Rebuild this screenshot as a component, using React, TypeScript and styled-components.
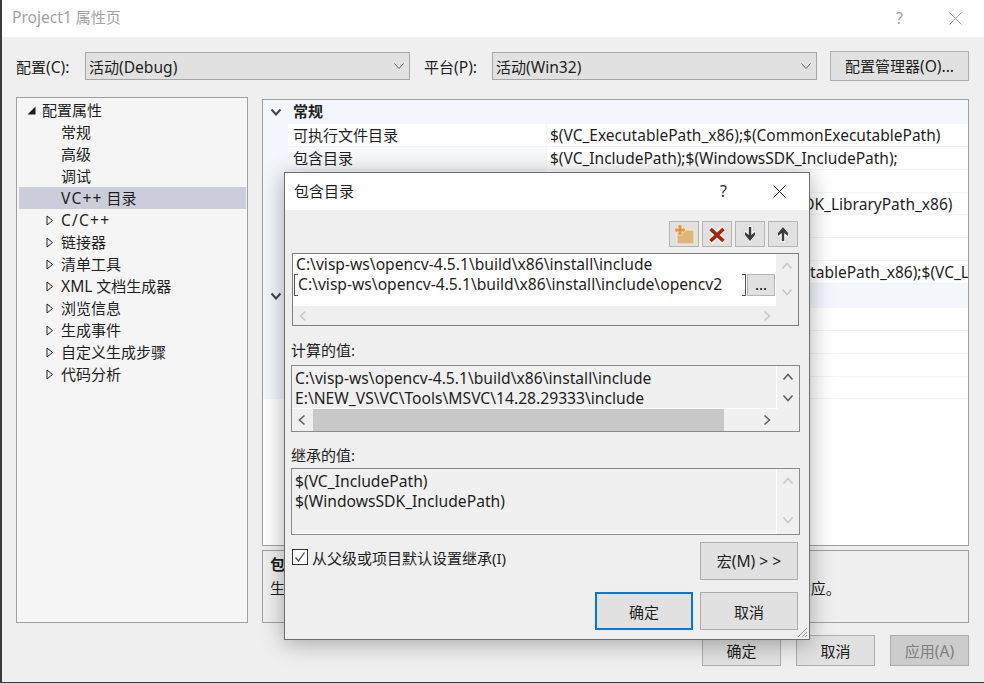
import React from "react";
import styled, { createGlobalStyle } from "styled-components";

const GlobalStyle = createGlobalStyle`
    html, body {
        margin: 0;
        padding: 0;
        background: #efefef;
    }
    * {
        box-sizing: border-box;
    }
    body {
        font-family: "Noto Sans", "Noto Sans CJK SC", sans-serif;
        font-size: 15px;
        color: #1e1e1e;
    }
`;

const ROW_H = "22.86px";

const Window = styled.div`
    position: relative;
    width: 984px;
    height: 683px;
    display: flex;
    flex-direction: column;
    overflow: hidden;
    background: #efefef;
    border-left: 2px solid #3a3a3a;
    border-bottom: 1px solid #3a3a3a;
`;

const TitleBar = styled.div`
    height: 37px;
    flex: none;
    display: flex;
    align-items: center;
    background: #fff;
    padding: 0 22px 0 10px;
    color: #a2a2a2;
`;

const TitleText = styled.div`
    flex: 1;
    padding-bottom: 3px;
`;

const Latin = styled.span<{ $spaced?: boolean }>`
    font-size: 15.6px;
    letter-spacing: ${({ $spaced }) => ($spaced ? "1.2px" : "0")};
`;

const HelpMark = styled.span<{ $dim?: boolean }>`
    color: ${({ $dim }) => ($dim ? "#a2a2a2" : "#1e1e1e")};
    margin-right: 46px;
    padding-bottom: 2px;
    font-size: 16px;
`;

const Content = styled.div`
    flex: 1;
    display: flex;
    flex-direction: column;
    padding: 14px 15px 0 14px;
`;

const ConfigRow = styled.div`
    display: flex;
    align-items: center;
    height: 30px;
`;

const ConfigLabel = styled.label<{ $width: number; $indent?: number }>`
    width: ${({ $width }) => $width}px;
    padding: 2px 0 0 ${({ $indent }) => $indent ?? 0}px;
    flex: none;
`;

const Select = styled.div`
    width: 325px;
    height: 28px;
    flex: none;
    display: flex;
    align-items: center;
    justify-content: space-between;
    padding: 0 4px 0 3px;
    background: #e1e1e1;
    border: 1px solid #a6a6a6;
`;

const SelectValue = styled.span`
    padding-top: 2px;
`;

const Button = styled.button<{ $w: number; $h: number; $primary?: boolean; $disabled?: boolean }>`
    width: ${({ $w }) => $w}px;
    height: ${({ $h }) => $h}px;
    flex: none;
    padding: 0;
    font: inherit;
    background: ${({ $disabled }) => ($disabled ? "#cccccc" : "#e1e1e1")};
    color: ${({ $disabled }) => ($disabled ? "#7e7e7e" : "#1e1e1e")};
    border: ${({ $primary }) => ($primary ? "2px solid #0078d7" : "1px solid #adadad")};
`;

const ManagerButton = styled(Button)`
    margin-left: 13px;
`;

const Main = styled.div`
    display: flex;
    margin-top: 16px;
    height: 526px;
`;

const Tree = styled.div`
    width: 232px;
    flex: none;
    margin-right: 14px;
    padding: 1px;
    background: #f5f5f5;
    border: 1px solid #a0a0a0;
`;

const TreeRow = styled.div<{ $level: number; $selected?: boolean }>`
    height: 22px;
    display: flex;
    align-items: center;
    margin-left: 1px;
    padding-left: ${({ $level }) => ($level ? 27 : 8)}px;
    line-height: 20px;
    background: ${({ $selected }) => ($selected ? "#cbcdda" : "transparent")};
    white-space: pre;
`;

const TreeArrow = styled.span`
    width: 15px;
    flex: none;
    display: flex;
    align-items: center;
`;

const RightColumn = styled.div`
    flex: 1;
    display: flex;
    flex-direction: column;
    gap: 4px;
    padding-top: 2px;
`;

const PropsPanel = styled.div`
    height: 447px;
    flex: none;
    overflow: hidden;
    background: #fff;
    border: 1px solid #a0a0a0;
`;

const SectionRow = styled.div`
    height: 24px;
    display: flex;
    align-items: center;
    padding-left: 7px;
    background: #f3f6fb;
    font-weight: 700;
`;

const SectionName = styled.span`
    margin-left: 11px;
    padding-bottom: 4px;
`;

const PropRow = styled.div`
    height: ${ROW_H};
    display: grid;
    grid-template-columns: 25px 258px 1fr;
    align-items: stretch;
    background: #f3f6fb;
    white-space: nowrap;
`;

const PropName = styled.div<{ $active?: boolean }>`
    display: flex;
    align-items: center;
    padding-left: 5px;
    background: ${({ $active }) => ($active ? "#fff" : "#f7f9fc")};
    border-bottom: 1px solid #f0f3f9;
`;

const PropValue = styled.div`
    display: flex;
    align-items: center;
    overflow: hidden;
    padding-left: 3px;
    margin-left: 1px;
    font-size: 15.5px;
    background: #fff;
    border-bottom: 1px solid #f0f3f9;
`;

const Description = styled.div`
    flex: 1;
    padding: 1px 7px;
    line-height: 24px;
    border: 1px solid #a0a0a0;
    white-space: nowrap;
    word-spacing: 3px;
    overflow: hidden;
`;

const DescriptionTitle = styled.div`
    font-weight: 700;
`;

const Footer = styled.div`
    display: flex;
    justify-content: flex-end;
    gap: 15px;
    margin-top: 12px;
`;

const Modal = styled.div`
    position: absolute;
    left: 282px;
    top: 172px;
    width: 526px;
    height: 468px;
    display: flex;
    flex-direction: column;
    background: #efefef;
    border: 1px solid #6e6e6e;
    box-shadow: 0 3px 22px rgba(0, 0, 0, 0.32);
`;

const ModalTitle = styled.div`
    height: 37px;
    flex: none;
    display: flex;
    align-items: center;
    padding: 0 23px 0 9px;
    background: #fff;
`;

const ModalBody = styled.div`
    flex: 1;
    display: flex;
    flex-direction: column;
    padding: 11px 9px 0 6px;
`;

const IconBar = styled.div`
    display: flex;
    justify-content: flex-end;
    gap: 3px;
    height: 26px;
    margin-right: 2px;
`;

const IconButton = styled.button`
    width: 30px;
    height: 26px;
    padding: 0;
    display: flex;
    align-items: center;
    justify-content: center;
    background: #e1e1e1;
    border: 1px solid #b4b4b4;
`;

const ListBox = styled.div`
    margin: 6px 1px 0 1px;
    height: 73px;
    display: grid;
    grid-template-columns: 1fr 22px;
    grid-template-rows: 52px 1fr;
    border: 1px solid #7f7f7f;
    background: #efefef;
`;

const ListContent = styled.div`
    background: #fff;
    padding-left: 3px;
    overflow: hidden;
    white-space: nowrap;
`;

const PathText = styled.div`
    height: 20px;
    line-height: 20px;
    font-size: 15.65px;
`;

const EditRow = styled.div`
    display: flex;
    align-items: center;
    height: 22px;
    margin-left: -2px;
`;

const EditField = styled.div`
    position: relative;
    width: 452px;
    height: 22px;
    line-height: 21px;
    padding-left: 4px;
    font-size: 15.65px;
    overflow: hidden;

    &::before,
    &::after {
        content: "";
        position: absolute;
        top: 0;
        bottom: 0;
        width: 3px;
        border: 1px solid #555;
    }
    &::before {
        left: 0;
        border-right: 0;
    }
    &::after {
        right: 0;
        border-left: 0;
    }
`;

const EllipsisButton = styled.button`
    width: 28px;
    height: 22px;
    margin-left: 1px;
    padding: 0 0 2px;
    font: inherit;
    line-height: 16px;
    background: #e1e1e1;
    border: 1px solid #b4b4b4;
`;

const VerticalBar = styled.div<{ $spread?: boolean }>`
    display: flex;
    flex-direction: column;
    align-items: center;
    justify-content: space-between;
    padding: ${({ $spread }) => ($spread ? "6px 0 8px" : "5px 0")};
`;

const HorizontalBar = styled.div`
    grid-column: 1 / span 2;
    display: flex;
    align-items: center;
    justify-content: space-between;
    padding: 0 25px 0 4px;
`;

const ValueLabel = styled.div<{ $top: number }>`
    margin-top: ${({ $top }) => $top}px;
    height: 20px;
    line-height: 20px;
`;

const ReadOnlyBox = styled.div<{ $height: number; $rows: string; $gap: number }>`
    margin-top: ${({ $gap }) => $gap}px;
    height: ${({ $height }) => $height}px;
    display: grid;
    grid-template-columns: 1fr 22px;
    grid-template-rows: ${({ $rows }) => $rows};
    border: 1px solid #8a8a8a;
    background: #f0f0f0;
`;

const ReadOnlyContent = styled.div<{ $pad: number }>`
    padding: ${({ $pad }) => $pad}px 0 0 3px;
    border-right: 1px solid #fff;
    border-bottom: 1px solid #fff;
    white-space: nowrap;
    overflow: hidden;
`;

const ReadOnlyHorizontal = styled.div`
    grid-column: 1 / span 2;
    display: flex;
    align-items: center;
    padding: 0 0 0 4px;
`;

const Thumb = styled.div`
    width: 411px;
    height: 100%;
    margin: 0 37px 0 5px;
    background: #c8c8c8;
`;

const LowerRow = styled.div`
    display: flex;
    justify-content: space-between;
    margin: 7px 2px 0 1px;
`;

const CheckRow = styled.label`
    display: flex;
    align-items: center;
    gap: 4px;
    height: 16px;
    margin-top: 7px;
`;

const CheckBox = styled.span`
    width: 16px;
    height: 16px;
    display: flex;
    align-items: center;
    justify-content: center;
    background: #fff;
    border: 1px solid #333;
`;

const ModalActions = styled.div`
    display: flex;
    justify-content: flex-end;
    gap: 7px;
    margin: 12px 2px 0 0;
`;

const Grip = styled.svg`
    position: absolute;
    right: 1px;
    bottom: 1px;
`;

const Chevron = ({ dir, color, size = 12, weight = 1.6 }: { dir: "up" | "down" | "left" | "right"; color: string; size?: number; weight?: number }) => {
    const rotate = { down: 0, up: 180, left: 90, right: -90 }[dir];
    return (
        <svg width={size} height={size} viewBox="0 0 12 12" style={{ transform: `rotate(${rotate}deg)` }}>
            <path d="M1.5 3.5 6 8.5l4.5-5" fill="none" stroke={color} strokeWidth={weight} />
        </svg>
    );
};

const OpenArrow = () => (
    <svg width="9" height="9" viewBox="0 0 9 9">
        <path d="M8.5 0.5V8.5H0.5Z" fill="#1e1e1e" />
    </svg>
);

const ClosedArrow = () => (
    <svg width="8" height="11" viewBox="0 0 8 11">
        <path d="M1 1 6.5 5.5 1 10Z" fill="#fff" stroke="#1e1e1e" />
    </svg>
);

const FolderIcon = () => (
    <svg width="24" height="22" viewBox="0 0 24 22">
        <path d="M5 8h8l1-1h8v14H5Z" fill="#dcb67a" stroke="#f5ecdc" />
        <g fill="#e39a45" stroke="#f8ecd6" strokeWidth="0.7">
            <circle cx="8" cy="3.6" r="2.2" />
            <circle cx="8" cy="10.4" r="2.2" />
            <circle cx="4.6" cy="7" r="2.2" />
            <circle cx="11.400" cy="7" r="2.2" />
        </g>
        <circle cx="8" cy="7" r="2.1" fill="#e8893a" />
    </svg>
);

const RemoveIcon = () => (
    <svg width="24" height="22" viewBox="0 0 24 22">
        <path d="M5 5 L19 19 M19 5 L5 19" stroke="#f6eeea" strokeWidth="6.500" />
        <path d="M5.500 6 L18.500 18 M18.500 6 L5.500 18" stroke="#a1260d" strokeWidth="3.600" />
    </svg>
);

const MoveIcon = ({ up }: { up?: boolean }) => (
    <svg width="20" height="22" viewBox="0 0 20 22" style={{ transform: up ? "rotate(180deg)" : undefined }}>
        <path d="M7 2h6v6l3-1v5l-6 8-6-8V7l3 1Z" fill="#f6f6f6" stroke="#cfcfcf" strokeWidth="0.6" />
        <path d="M8.800 4h2.400v8L15 9v3l-5 6-5-6V9l3.800 3Z" fill="#3c3c3c" />
    </svg>
);

const treeItems = [
    { label: "常规" },
    { label: "高级" },
    { label: "调试" },
    { latin: "VC++", spaced: true, label: " 目录", selected: true },
    { latin: "C/C++", spaced: true, label: "", closed: true },
    { label: "链接器", closed: true },
    { label: "清单工具", closed: true },
    { latin: "XML", label: " 文档生成器", closed: true },
    { label: "浏览信息", closed: true },
    { label: "生成事件", closed: true },
    { label: "自定义生成步骤", closed: true },
    { label: "代码分析", closed: true },
];

const generalRows = [
    { name: "可执行文件目录", value: "$(VC_ExecutablePath_x86);$(CommonExecutablePath)", active: true },
    { name: "包含目录", value: "$(VC_IncludePath);$(WindowsSDK_IncludePath);" },
    { name: "引用目录", value: "" },
    { name: "库目录", value: "$(VC_LibraryPath_x86);$(WindowsSDK_LibraryPath_x86)" },
    { name: "Windows 运行库目录", value: "" },
    { name: "源目录", value: "" },
    { name: "排除目录", value: "$(CommonExcludePath);$(VC_ExecutablePath_x86);$(VC_LibraryPath_x86)" },
];

const publicRows = ["公共包含目录", "公共库目录", "所有模块都是公共的", "公共项目内容"];

const App = () => {
    return (
        <>
            <GlobalStyle />
            <Window>
                <TitleBar>
                    <TitleText><Latin>Project1</Latin> 属性页</TitleText>
                    <HelpMark $dim>?</HelpMark>
                    <svg width="13" height="13" viewBox="0 0 13 13">
                        <path d="M0.5 0.5 12.5 12.5M12.5 0.5 0.5 12.5" stroke="#a2a2a2" />
                    </svg>
                </TitleBar>
                <Content>
                    <ConfigRow>
                        <ConfigLabel $width={69}>配置<Latin>(C):</Latin></ConfigLabel>
                        <Select>
                            <SelectValue>活动<Latin>(Debug)</Latin></SelectValue>
                            <Chevron dir="down" color="#606060" weight={1} />
                        </Select>
                        <ConfigLabel $width={82} $indent={14}>平台<Latin>(P):</Latin></ConfigLabel>
                        <Select>
                            <SelectValue>活动<Latin>(Win32)</Latin></SelectValue>
                            <Chevron dir="down" color="#606060" weight={1} />
                        </Select>
                        <ManagerButton $w={139} $h={30}>配置管理器<Latin>(O)...</Latin></ManagerButton>
                    </ConfigRow>
                    <Main>
                        <Tree>
                            <TreeRow $level={0}>
                                <TreeArrow><OpenArrow /></TreeArrow>
                                配置属性
                            </TreeRow>
                            {treeItems.map((item) => (
                                <TreeRow key={item.label + item.latin} $level={1} $selected={item.selected}>
                                    <TreeArrow>{item.closed && <ClosedArrow />}</TreeArrow>
                                    {item.latin && <Latin $spaced={item.spaced}>{item.latin}</Latin>}
                                    {item.label}
                                </TreeRow>
                            ))}
                        </Tree>
                        <RightColumn>
                            <PropsPanel>
                                <SectionRow>
                                    <Chevron dir="down" color="#444" weight={2} />
                                    <SectionName>常规</SectionName>
                                </SectionRow>
                                {generalRows.map((row) => (
                                    <PropRow key={row.name}>
                                        <span />
                                        <PropName $active={row.active}>{row.name}</PropName>
                                        <PropValue>{row.value}</PropValue>
                                    </PropRow>
                                ))}
                                <SectionRow>
                                    <Chevron dir="down" color="#444" weight={2} />
                                    <SectionName>公共</SectionName>
                                </SectionRow>
                                {publicRows.map((name) => (
                                    <PropRow key={name}>
                                        <span />
                                        <PropName>{name}</PropName>
                                        <PropValue />
                                    </PropRow>
                                ))}
                            </PropsPanel>
                            <Description>
                                <DescriptionTitle>包含目录</DescriptionTitle>
                                生成 <Latin $spaced>VC++</Latin> 项目期间{"\uFF0C"}搜索包含文件时使用的路径。与环境变量 <Latin>INCLUDE</Latin> 相对应。
                            </Description>
                        </RightColumn>
                    </Main>
                    <Footer>
                        <Button $w={79} $h={31}>确定</Button>
                        <Button $w={79} $h={31}>取消</Button>
                        <Button $w={79} $h={31} $disabled>应用<Latin>(A)</Latin></Button>
                    </Footer>
                </Content>
                <Modal>
                    <ModalTitle>
                        <TitleText>包含目录</TitleText>
                        <HelpMark>?</HelpMark>
                        <svg width="13" height="13" viewBox="0 0 13 13">
                            <path d="M0.5 0.5 12.5 12.5M12.5 0.5 0.5 12.5" stroke="#1e1e1e" />
                        </svg>
                    </ModalTitle>
                    <ModalBody>
                        <IconBar>
                            <IconButton><FolderIcon /></IconButton>
                            <IconButton><RemoveIcon /></IconButton>
                            <IconButton><MoveIcon /></IconButton>
                            <IconButton><MoveIcon up /></IconButton>
                        </IconBar>
                        <ListBox>
                            <ListContent>
                                <PathText>C:\visp-ws\opencv-4.5.1\build\x86\install\include</PathText>
                                <EditRow>
                                    <EditField>C:\visp-ws\opencv-4.5.1\build\x86\install\include\opencv2</EditField>
                                    <EllipsisButton>...</EllipsisButton>
                                </EditRow>
                            </ListContent>
                            <VerticalBar $spread>
                                <Chevron dir="up" color="#c8c8c8" />
                                <Chevron dir="down" color="#c8c8c8" />
                            </VerticalBar>
                            <HorizontalBar>
                                <Chevron dir="left" color="#c8c8c8" />
                                <Chevron dir="right" color="#c8c8c8" />
                            </HorizontalBar>
                        </ListBox>
                        <ValueLabel $top={14}>计算的值:</ValueLabel>
                        <ReadOnlyBox $height={67} $rows="43px 1fr" $gap={5}>
                            <ReadOnlyContent $pad={2}>
                                <PathText>C:\visp-ws\opencv-4.5.1\build\x86\install\include</PathText>
                                <PathText>E:\NEW_VS\VC\Tools\MSVC\14.28.29333\include</PathText>
                            </ReadOnlyContent>
                            <VerticalBar>
                                <Chevron dir="up" color="#606060" />
                                <Chevron dir="down" color="#606060" />
                            </VerticalBar>
                            <ReadOnlyHorizontal>
                                <Chevron dir="left" color="#606060" />
                                <Thumb />
                                <Chevron dir="right" color="#606060" />
                            </ReadOnlyHorizontal>
                        </ReadOnlyBox>
                        <ValueLabel $top={13}>继承的值:</ValueLabel>
                        <ReadOnlyBox $height={67} $rows="1fr" $gap={3}>
                            <ReadOnlyContent $pad={2}>
                                <PathText>$(VC_IncludePath)</PathText>
                                <PathText>$(WindowsSDK_IncludePath)</PathText>
                            </ReadOnlyContent>
                            <VerticalBar $spread>
                                <Chevron dir="up" color="#c8c8c8" />
                                <Chevron dir="down" color="#c8c8c8" />
                            </VerticalBar>
                        </ReadOnlyBox>
                        <LowerRow>
                            <CheckRow>
                                <CheckBox>
                                    <svg width="12" height="12" viewBox="0 0 12 12">
                                        <path d="M1.5 6.5 4.5 10 10.5 1.5" fill="none" stroke="#444" strokeWidth="1.2" />
                                    </svg>
                                </CheckBox>
                                从父级或项目默认设置继承(I)
                            </CheckRow>
                            <Button $w={98} $h={38}>宏<Latin>(M) &gt; &gt;</Latin></Button>
                        </LowerRow>
                        <ModalActions>
                            <Button $w={98} $h={38} $primary>确定</Button>
                            <Button $w={98} $h={38}>取消</Button>
                        </ModalActions>
                    </ModalBody>
                    <Grip width="12" height="12" viewBox="0 0 12 12">
                        <path d="M11 2 2 11M11 6 6 11M11 9 9 11" stroke="#9a9a9a" />
                    </Grip>
                </Modal>
            </Window>
        </>
    );
};

export default App;
